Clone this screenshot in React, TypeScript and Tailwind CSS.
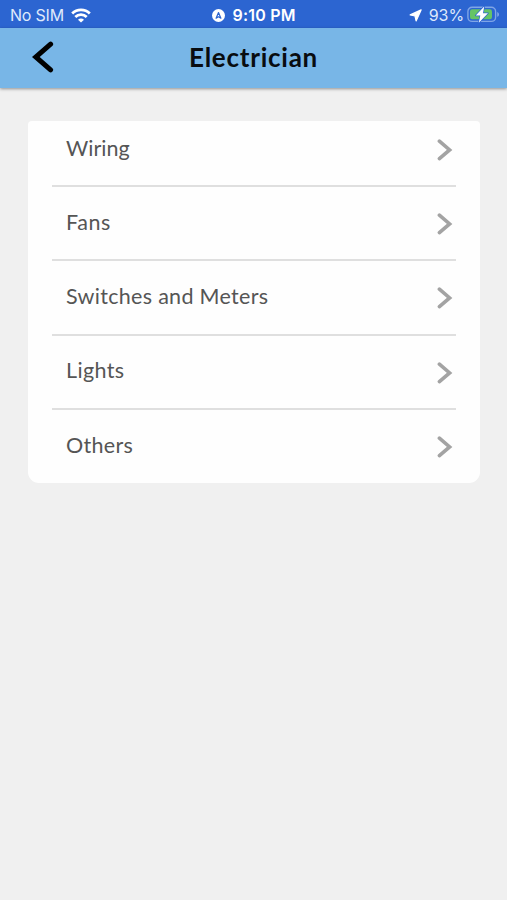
interface Category {
  id: string;
  label: string;
  tracking: string;
}

const categories: Category[] = [
  { id: "wiring", label: "Wiring", tracking: "tracking-[0.05px]" },
  { id: "fans", label: "Fans", tracking: "tracking-[0.6px]" },
  { id: "switches", label: "Switches and Meters", tracking: "tracking-[0.3px]" },
  { id: "lights", label: "Lights", tracking: "tracking-[0.35px]" },
  { id: "others", label: "Others", tracking: "tracking-[0.3px]" },
];

function WifiIcon() {
  return (
    <svg width="20" height="15" viewBox="0 0 20 15" fill="none" stroke="#fff" strokeWidth="2.8">
      <path d="M1.2 5.4C6 .7 14 .7 18.8 5.4" />
      <path d="M4.3 8.9c3.2-3.1 8.2-3.1 11.4 0" />
      <path d="M10 14.6 7 11.7c1.7-1.5 4.3-1.5 6 0Z" fill="#fff" stroke="none" />
    </svg>
  );
}

function CompassIcon() {
  return (
    <svg width="13" height="13" viewBox="0 0 13 13">
      <circle cx="6.5" cy="6.5" r="6.5" fill="#fff" />
      <path d="M4.1 9.2 6.5 3.5 8.9 9.2 6.5 7.8Z" fill="none" stroke="#2c65d1" strokeWidth="1.2" strokeLinejoin="round" />
    </svg>
  );
}

function BatteryIcon() {
  return (
    <svg width="33" height="18" viewBox="0 0 33 18">
      <rect x="0.9" y="1.2" width="27.7" height="14.2" rx="4.2" fill="none" stroke="#7fa5e6" strokeWidth="1.4" />
      <path d="M30.2 5.9c2.4.7 2.4 4.2 0 4.9Z" fill="#7fa5e6" />
      <rect x="3" y="3.3" width="22" height="10" rx="2.2" fill="#65c466" />
      <path
        d="M17.2.6 8.7 9.6h4.6L11.8 16.8l9.2-9.6h-5Z"
        fill="#fff"
        stroke="#2c65d1"
        strokeWidth="1.4"
        strokeLinejoin="round"
        paintOrder="stroke"
      />
    </svg>
  );
}

function StatusBar() {
  return (
    <div className="grid h-7 grid-cols-[1fr_auto_1fr] items-center bg-[#2c65d1] pt-[2px] font-['Inter',sans-serif] text-[16px] leading-none text-white">
      <div className="flex items-center gap-[7px] pl-[10px] text-[#dfe9fb]">
        <span className="w-[54px] whitespace-nowrap tracking-[-0.2px]">No SIM</span>
        <WifiIcon />
      </div>
      <div className="flex items-center gap-[8px]">
        <CompassIcon />
        <span className="w-[63px] whitespace-nowrap font-semibold tracking-[0.2px]">9:10 PM</span>
      </div>
      <div className="flex items-center justify-end pr-[7px] text-[#dfe9fb]">
        <svg className="mr-[7px]" width="13" height="13" viewBox="0 0 13 13">
          <path d="M12.1.9 1.2 5.9 6 7l1.1 4.9Z" fill="#fff" stroke="#fff" strokeWidth="1.2" strokeLinejoin="round" />
        </svg>
        <span className="mr-[3px] whitespace-nowrap tracking-[-0.1px]">93%</span>
        <BatteryIcon />
      </div>
    </div>
  );
}

function Header() {
  return (
    <header className="grid h-[60px] grid-cols-[1fr_auto_1fr] items-center bg-[#78b6e7] pb-[3px] shadow-[0_1px_3px_rgba(0,0,0,0.4)]">
      <button className="pl-8" aria-label="Back">
        <svg width="22" height="32" viewBox="0 0 22 32" fill="none" stroke="#000" strokeWidth="5" strokeLinecap="round">
          <path d="M18.6 3.2 3.8 16 18.6 28.8" />
        </svg>
      </button>
      <h1 className="text-[26px] font-bold leading-none tracking-[0.75px] text-[#080c10]">Electrician</h1>
      <div />
    </header>
  );
}

function CategoryRow({ category, divider }: { category: Category; divider: boolean }) {
  return (
    <li
      className={`flex h-[74.2px] items-center justify-between pl-[14px] pr-[3px] ${
        divider ? "border-b-2 border-[#dfdfdf]" : "pb-[2px]"
      }`}
    >
      <span className={`pb-px text-[21.5px] leading-none text-[#555] ${category.tracking}`}>{category.label}</span>
      <svg width="17" height="24" viewBox="0 0 17 24" fill="none" stroke="#a3a3a3" strokeWidth="3.6" strokeLinecap="round">
        <path d="M3.4 4.2 13.6 12.9 3.4 21.6" />
      </svg>
    </li>
  );
}

export default function App() {
  return (
    <div className="h-[900px] w-[507px] overflow-hidden bg-[#f0f0f0] font-['Lato',sans-serif]">
      <StatusBar />
      <Header />
      <main className="px-7 pt-[33px]">
        <div className="mr-[-1px] flow-root h-[362px] rounded-t-[4px] rounded-b-[11px] bg-[#fefefe] px-6">
          <ul className="-mt-[8px]">
            {categories.map((category, i) => (
              <CategoryRow key={category.id} category={category} divider={i < categories.length - 1} />
            ))}
          </ul>
        </div>
      </main>
    </div>
  );
}
